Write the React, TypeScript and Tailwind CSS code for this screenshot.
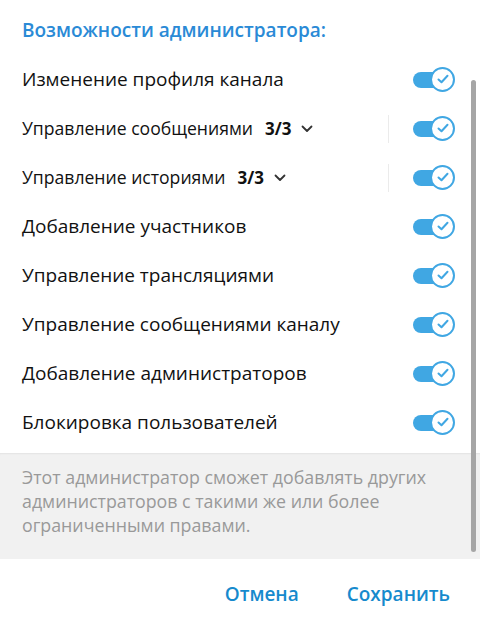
import React from 'react'

type Row = { label: string; count?: string }

const rows: Row[] = [
  { label: 'Изменение профиля канала' },
  { label: 'Управление сообщениями', count: '3/3' },
  { label: 'Управление историями', count: '3/3' },
  { label: 'Добавление участников' },
  { label: 'Управление трансляциями' },
  { label: 'Управление сообщениями каналу' },
  { label: 'Добавление администраторов' },
  { label: 'Блокировка пользователей' },
]

function Toggle() {
  return (
    <div className="relative w-[42px] h-[26px] shrink-0">
      <div className="absolute left-0 top-[5px] w-[36px] h-[16px] rounded-full bg-[#40a7e3]" />
      <div className="absolute left-[17px] top-0 w-[25px] h-[25px] rounded-full bg-white border-2 border-[#40a7e3] flex items-center justify-center">
        <svg width="14" height="14" viewBox="0 0 14 14" fill="none">
          <path
            d="M2.5 7.5 L5.5 10.3 L11.5 3.8"
            stroke="#40a7e3"
            strokeWidth="2"
            strokeLinecap="round"
            strokeLinejoin="round"
          />
        </svg>
      </div>
    </div>
  )
}

function Chevron() {
  return (
    <svg width="12" height="8" viewBox="0 0 12 8" fill="none" className="ml-[10px] mt-[1px]">
      <path d="M1.5 1.5 L6 6 L10.5 1.5" stroke="#333" strokeWidth="1.8" strokeLinecap="round" strokeLinejoin="round" />
    </svg>
  )
}

export default function App() {
  return (
    <div
      className="relative w-[480px] h-[626px] bg-white flex flex-col overflow-hidden"
      style={{ fontFamily: '"Open Sans", "Noto Sans", sans-serif' }}
    >
      <div className="flex flex-col h-[559px]">
        <h2 className="pl-[22px] pt-[18px] pb-[13px] text-[19px] leading-[24px] font-semibold text-[#2a8ad6]">
          Возможности администратора:
        </h2>
        <div className="flex flex-col">
          {rows.map((r) => (
            <div key={r.label} className="h-[49px] flex items-center pl-[22px] pr-[25px]">
              {r.count ? (
                <div className="flex-1 flex items-center text-[17.6px] text-[#111]">
                  <span>{r.label}</span>
                  <span className="ml-[12px] font-bold text-[17px]">{r.count}</span>
                  <Chevron />
                </div>
              ) : (
                <div className="flex-1 flex items-center text-[19px] text-[#111]">
                  <span>{r.label}</span>
                </div>
              )}
              {r.count && <div className="w-px h-[28px] bg-[#ebebeb] mr-[24px]" />}
              <Toggle />
            </div>
          ))}
        </div>
        <div className="mt-[6px] flex-1 bg-[#f1f1f1] shadow-[inset_0_2px_2px_-1px_rgba(0,0,0,0.06)] pl-[22px] pr-[30px] pt-[12px] text-[17.8px] leading-[24px] text-[#999]">
          Этот администратор сможет добавлять других администраторов с такими же или более ограниченными правами.
        </div>
      </div>
      <div className="flex-1 flex items-center justify-end gap-[48px] pr-[30px] pt-[4px] text-[19px] font-semibold text-[#168acd]">
        <button>Отмена</button>
        <button>Сохранить</button>
      </div>
      <div className="absolute left-[471px] top-[80px] w-[5px] h-[472px] rounded-full bg-[#a6a6a6]" />
    </div>
  )
}
